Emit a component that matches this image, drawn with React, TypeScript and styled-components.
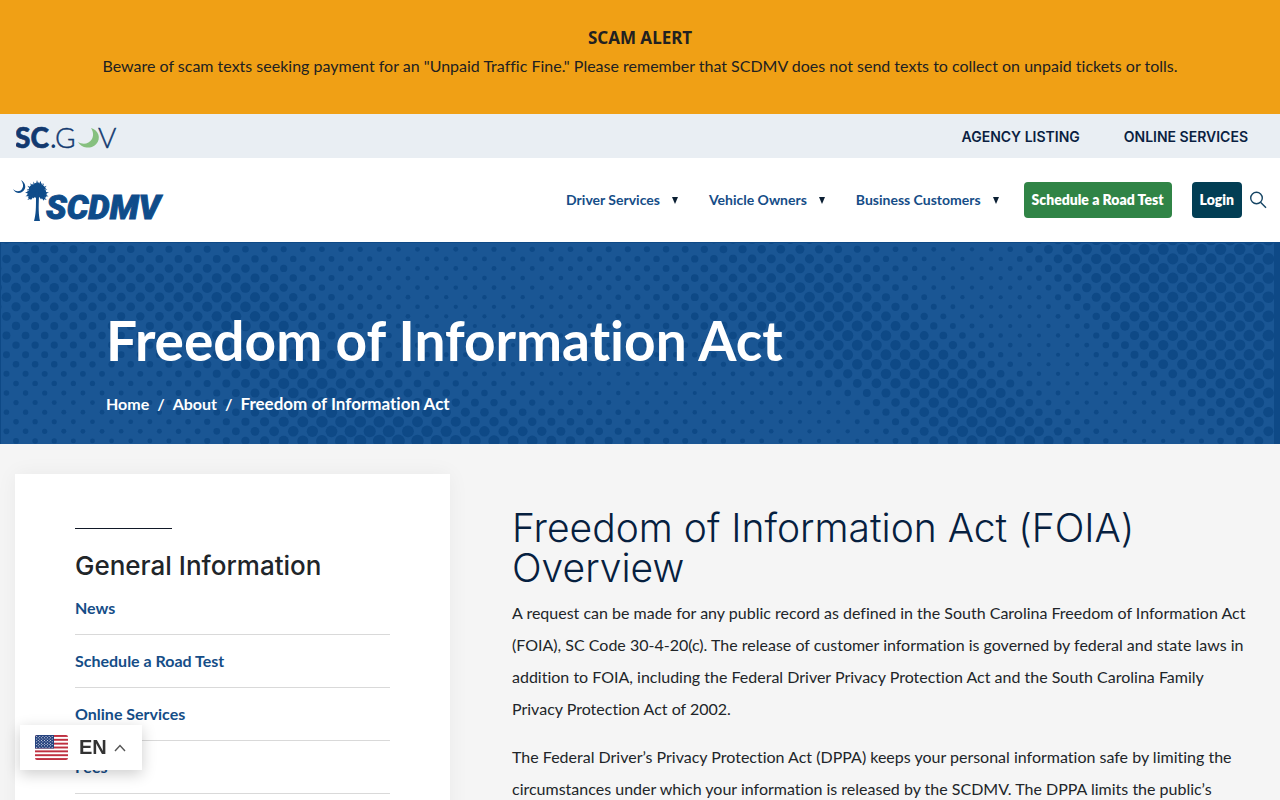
import React from "react";
import styled, { createGlobalStyle } from "styled-components";

const GlobalStyle = createGlobalStyle`
  *, *::before, *::after { box-sizing: border-box; }
  body {
    margin: 0;
    background: #f5f5f5;
    color: #212529;
    font-family: Lato, sans-serif;
    font-size: 16px;
    font-variant-ligatures: none;
  }
  a { color: inherit; text-decoration: none; }
  h1, h2, h3, p, ul, ol { margin: 0; padding: 0; }
  ul, ol { list-style: none; }
`;

const Alert = styled.section`
  background: #f0a015;
  color: #212121;
  min-height: 114px;
  padding: 24px 16px;
  text-align: center;
  line-height: 28px;
`;

const AlertTitle = styled.strong`
  display: block;
  font-family: "Noto Sans", sans-serif;
  font-size: 17px;
  font-weight: 700;
`;

const StateBar = styled.div`
  display: flex;
  align-items: center;
  justify-content: space-between;
  height: 44px;
  padding: 0 32px 0 16px;
  background: #e9eef3;
`;

const StateLinks = styled.nav`
  display: flex;
  gap: 44px;
  color: #0b1f42;
  font-family: Inter, sans-serif;
  font-size: 14px;
  font-weight: 600;
`;

const Header = styled.header`
  display: flex;
  align-items: center;
  justify-content: space-between;
  height: 84px;
  padding: 0 13px 0 12px;
  background: #fff;
`;

const LogoLink = styled.a`
  display: flex;
`;

const MainNav = styled.nav`
  display: flex;
  align-items: center;
`;

const Menus = styled.div`
  display: flex;
  gap: 31px;
  margin-right: 25px;
`;

const MenuButton = styled.button`
  display: flex;
  align-items: center;
  gap: 12px;
  padding: 0;
  border: 0;
  background: none;
  color: #154d87;
  font-family: inherit;
  font-size: 14px;
  font-weight: 700;
  line-height: 18px;
`;

const Caret = styled.span`
  width: 0;
  border: 3px solid transparent;
  border-top: 7px solid #0b1f33;
  border-bottom: 0;
`;

const ActionLink = styled.a<{ $tone: string; $gap: number }>`
  height: 36px;
  margin-right: ${(p) => p.$gap}px;
  padding: 0 8px;
  border-radius: 4px;
  background: ${(p) => p.$tone};
  color: #fff;
  font-size: 14px;
  font-weight: 800;
  line-height: 36px;
`;

const IconButton = styled.button`
  display: flex;
  padding: 0;
  border: 0;
  background: none;
  color: #154463;
`;

const Hero = styled.section`
  position: relative;
  min-height: 202px;
  padding: 63px 106px 0;
  overflow: hidden;
  background: #1a5694;
  color: #fff;
`;

const HeroPattern = styled.svg`
  position: absolute;
  inset: 0;
  width: 100%;
  height: 100%;
`;

const HeroBody = styled.div`
  position: relative;
`;

const HeroTitle = styled.h1`
  font-size: 55px;
  font-weight: 700;
  line-height: 70px;
`;

const Crumbs = styled.ol`
  display: flex;
  align-items: baseline;
  gap: 8px;
  margin-top: 17px;
  font-size: 16px;
  font-weight: 700;
  line-height: 24px;
`;

const CurrentCrumb = styled.li`
  font-size: 17px;
`;

const Columns = styled.main`
  display: grid;
  grid-template-columns: minmax(0, 435fr) minmax(0, 738fr);
  gap: 62px;
  padding: 30px 30px 0 15px;
`;

const SideCard = styled.aside`
  padding: 54px 60px 24px;
  background: #fff;
  box-shadow: 0 0 20px rgba(0, 0, 0, 0.05);
`;

const CardRule = styled.div`
  width: 97px;
  height: 1px;
  background: #111827;
`;

const CardTitle = styled.h3`
  margin-top: 21px;
  font-family: Inter, sans-serif;
  font-size: 26px;
  font-weight: 500;
  line-height: 32px;
`;

const SideItem = styled.li`
  height: 53px;
  padding-top: 14px;
  border-bottom: 1px solid #d9d9d9;
  color: #154d87;
  font-weight: 700;
  line-height: 24px;
`;

const Article = styled.article`
  padding-top: 34px;
`;

const ArticleTitle = styled.h2`
  margin-bottom: 9px;
  color: #06203f;
  font-family: Inter, sans-serif;
  font-size: 39px;
  font-weight: 300;
  line-height: 40px;
`;

const Paragraph = styled.p`
  margin-bottom: 16px;
  line-height: 32px;
`;

const LanguageButton = styled.button`
  position: fixed;
  bottom: 30px;
  left: 20px;
  display: flex;
  align-items: center;
  width: 122px;
  height: 45px;
  padding: 0 15px;
  border: 0;
  background: #fff;
  box-shadow: 0 4px 14px rgba(0, 0, 0, 0.2);
  color: #333;
  font-family: "Liberation Sans", sans-serif;
  font-size: 20px;
  font-weight: 700;
`;

const LanguageCode = styled.span`
  margin: 0 7px 0 11px;
`;

/* Halftone background: dot radii sampled every 40px across, one line per sampled height. */
const SAMPLE_STEP = 40;
const SAMPLE_ROWS: [number, number[]][] = [
  [7, [4, 4, 4, 3.8, 3.5, 3.5, 3.3, 3, 2.8, 2.6, 2.4, 2.4, 2.5, 2.6, 2.7, 3, 3, 3.3, 3.8, 4.2, 4.4, 3.8, 3, 2.5, 2.1, 2.2, 4.2, 5.2, 5.5, 5.5, 5.6, 5.7, 5.8]],
  [45, [5, 4.8, 4.6, 4.6, 5, 5.3, 5.3, 4.3, 3.2, 2.8, 2.4, 2.2, 2.3, 2.2, 2.2, 2.7, 3, 3.8, 4.2, 4.8, 5.3, 5.3, 3.8, 2.5, 2, 2.1, 2.4, 4.6, 5.4, 5.5, 5.6, 5.7, 5.8]],
  [80, [4.3, 4, 3.9, 3.9, 4.2, 4.8, 5.4, 5.2, 4, 3, 2.4, 2, 2, 2, 2.2, 2.5, 2.9, 3.5, 4.2, 4.8, 5.5, 5.8, 5.3, 4, 2.4, 2, 2, 2.5, 4.8, 5.4, 5.6, 5.7, 5.8]],
  [120, [3.3, 3.3, 3.2, 3.2, 3.4, 4, 4.8, 5.3, 4.8, 3.8, 3.2, 2.6, 2.3, 2.2, 2.2, 2.2, 2.3, 2.4, 2.6, 3, 3.7, 5.2, 5.4, 5.6, 5.2, 2.8, 2, 2, 3, 5, 5.5, 5.6, 5.7]],
  [140, [2.8, 2.7, 2.6, 2.6, 2.8, 3.4, 4.3, 5.5, 5.6, 4.8, 4, 3.2, 2.6, 2.3, 2.1, 2, 2, 2, 2, 2.2, 2.6, 4, 5, 5.4, 5.6, 4.5, 2.3, 2, 2, 3.2, 4.8, 5.5, 5.6]],
  [160, [2.6, 2.5, 2.3, 2.3, 2.6, 3, 3.8, 5, 5.6, 5.5, 4.8, 4.4, 3.8, 3.2, 2.8, 2.5, 2.2, 2, 2, 2, 2, 2.2, 3.8, 5, 5.5, 5.4, 3, 2.1, 2, 2.4, 4, 5.2, 5.4]],
  [200, [3, 2.7, 2.4, 2.3, 2.4, 2.8, 4, 5, 5.8, 6.2, 6.4, 6, 5.8, 5.5, 5, 4.3, 3.5, 3, 2.6, 2.4, 2.2, 2, 2.1, 4, 5.6, 5.8, 5.6, 3.6, 2.2, 2.1, 2.4, 4, 5]],
];

const sampleRow = (values: number[], x: number) => {
  const t = Math.min(Math.max(x / SAMPLE_STEP, 0), values.length - 1.001);
  const i = Math.floor(t);
  return values[i] + (values[i + 1] - values[i]) * (t - i);
};

const radiusAt = (x: number, y: number) => {
  let k = 0;
  while (k < SAMPLE_ROWS.length - 2 && y > SAMPLE_ROWS[k + 1][0]) k++;
  const [y0, upper] = SAMPLE_ROWS[k];
  const [y1, lower] = SAMPLE_ROWS[k + 1];
  const t = Math.min(Math.max((y - y0) / (y1 - y0), 0), 1);
  return sampleRow(upper, x) * (1 - t) + sampleRow(lower, x) * t;
};

const DOTS: { x: number; y: number; r: number }[] = [];
for (let row = -1; row < 21; row++) {
  const y = 7.3 + row * 9.58;
  for (let col = -1; col < 67; col++) {
    const x = 16 + col * 19.12 + (row % 2 ? 9.56 : 0);
    if (x < 1276) DOTS.push({ x, y, r: radiusAt(x, y) });
  }
}

const Halftone = () => (
  <HeroPattern viewBox="0 0 1280 202" preserveAspectRatio="xMidYMin slice" aria-hidden="true">
    <g fill="#0e4986">
      {DOTS.map((d, i) => (
        <circle key={i} cx={d.x} cy={d.y} r={d.r} />
      ))}
      <rect x="1274" width="6" height="202" />
      <rect width="1" height="202" />
      <rect width="1280" height="1" />
    </g>
  </HeroPattern>
);

const ScGovLogo = () => (
  <svg width="104" height="40" viewBox="0 0 104 40" role="img" aria-label="SC.GOV">
    <g fill="#12396f" fontFamily="Lato, sans-serif" fontSize="28">
      <text x="-1" y="32" fontWeight="900" stroke="#12396f" strokeWidth="0.6">SC</text>
      <text x="34" y="32">.</text>
      <text x="39" y="32" fontWeight="300" stroke="#12396f" strokeWidth="0.4">G</text>
      <text x="82" y="32" fontWeight="300" stroke="#12396f" strokeWidth="0.4">V</text>
    </g>
    <path d="M75 12A11 10 0 1 1 62 26C67 29 73 28 76 23C78 19 77 15 75 12Z" fill="#86c07f" />
  </svg>
);

/* Each palm frond: its direction in degrees and its length. */
const FRONDS: [number, number][] = [
  [-178, 12], [-160, 11], [-143, 12], [-125, 12], [-108, 12], [-90, 13], [-72, 13],
  [-54, 12], [-37, 12], [-20, 11], [-2, 12], [16, 12], [36, 12], [144, 12], [164, 12],
];

const DmvLogo = () => (
  <svg width="154" height="52" viewBox="0 0 154 52" role="img" aria-label="SCDMV">
    <g fill="#0f4c8a">
      <path d="M9 6C14 9 15 15 10 18C7 20 3 19 1 15C4 18 8 18 10 15C12 12 11 9 9 6Z" />
      <path d="M24 22L27 22C26.500 34 26.500 40 28 47L22 47C24 40 24 34 24 22Z" />
      <g transform="translate(25 19)">
        <circle r="5" />
        {FRONDS.map(([angle, length]) => (
          <path
            key={angle}
            transform={`rotate(${angle}) scale(${length / 12})`}
            d="M2 -1L6 -2.500L6 -1.300L9 -2L9 -0.800L12 0L9.500 0.800L10 2.200L7 1.400L7 2.800L4 1.600L2 1Z"
          />
        ))}
      </g>
      <text
        x="34"
        y="45"
        fontFamily="Roboto, sans-serif"
        fontSize="34"
        fontWeight="900"
        fontStyle="italic"
        stroke="#0f4c8a"
        strokeWidth="1"
      >
        SCDMV
      </text>
    </g>
  </svg>
);

const SearchIcon = () => (
  <svg width="18" height="18" viewBox="0 0 18 18" fill="none" stroke="currentColor" strokeWidth="1.4" aria-hidden="true">
    <circle cx="7.500" cy="7" r="5.800" />
    <path d="M11.500 11.200L17 16.800" />
  </svg>
);

const FlagIcon = () => (
  <svg width="33" height="25" viewBox="0 0 33 25" aria-hidden="true">
    <defs>
      <clipPath id="flag-edge"><rect width="33" height="25" rx="2" /></clipPath>
    </defs>
    <g clipPath="url(#flag-edge)">
      <rect width="33" height="25" fill="#fff" />
      {Array.from({ length: 7 }, (_, i) => (
        <rect key={i} y={(i * 50) / 13} width="33" height={25 / 13} fill="#bf3040" />
      ))}
      <rect width="19" height="13.5" fill="#26437f" />
      <g fill="#fff">
        {Array.from({ length: 9 }, (_, r) =>
          Array.from({ length: r % 2 ? 5 : 6 }, (_, c) => (
            <circle key={`${r}-${c}`} cx={1.7 + c * 3.1 + (r % 2 ? 1.55 : 0)} cy={1.4 + r * 1.35} r="0.5" />
          ))
        )}
      </g>
    </g>
  </svg>
);

const ChevronUp = () => (
  <svg width="12" height="8" viewBox="0 0 12 8" fill="none" stroke="#555" strokeWidth="1.4" aria-hidden="true">
    <path d="M1 7L6 1.5L11 7" />
  </svg>
);

const MENUS = ["Driver Services", "Vehicle Owners", "Business Customers"];
const SIDE_LINKS = ["News", "Schedule a Road Test", "Online Services", "Fees"];

export default function App() {
  return (
    <>
      <GlobalStyle />
      <Alert>
        <AlertTitle>SCAM ALERT</AlertTitle>
        <p>
          Beware of scam texts seeking payment for an "Unpaid Traffic Fine." Please remember that SCDMV does not send
          texts to collect on unpaid tickets or tolls.
        </p>
      </Alert>
      <StateBar>
        <LogoLink href="#"><ScGovLogo /></LogoLink>
        <StateLinks>
          <a href="#">AGENCY LISTING</a>
          <a href="#">ONLINE SERVICES</a>
        </StateLinks>
      </StateBar>
      <Header>
        <LogoLink href="#"><DmvLogo /></LogoLink>
        <MainNav>
          <Menus>
            {MENUS.map((label) => (
              <MenuButton key={label} type="button">
                {label}
                <Caret />
              </MenuButton>
            ))}
          </Menus>
          <ActionLink href="#" $tone="#308446" $gap={20}>Schedule a Road Test</ActionLink>
          <ActionLink href="#" $tone="#023e54" $gap={7}>Login</ActionLink>
          <IconButton type="button" aria-label="Search"><SearchIcon /></IconButton>
        </MainNav>
      </Header>
      <Hero>
        <Halftone />
        <HeroBody>
          <HeroTitle>Freedom of Information Act</HeroTitle>
          <Crumbs>
            <li><a href="#">Home</a></li>
            <li>/</li>
            <li><a href="#">About</a></li>
            <li>/</li>
            <CurrentCrumb>Freedom of Information Act</CurrentCrumb>
          </Crumbs>
        </HeroBody>
      </Hero>
      <Columns>
        <SideCard>
          <CardRule />
          <CardTitle>General Information</CardTitle>
          <ul>
            {SIDE_LINKS.map((label) => (
              <SideItem key={label}><a href="#">{label}</a></SideItem>
            ))}
          </ul>
        </SideCard>
        <Article>
          <ArticleTitle>Freedom of Information Act (FOIA) Overview</ArticleTitle>
          <Paragraph>
            A request can be made for any public record as defined in the South Carolina Freedom of Information Act
            (FOIA), SC Code 30-4-20(c). The release of customer information is governed by federal and state laws in
            addition to FOIA, including the Federal Driver Privacy Protection Act and the South Carolina Family Privacy
            Protection Act of 2002.
          </Paragraph>
          <Paragraph>
            The Federal Driver’s Privacy Protection Act (DPPA) keeps your personal information safe by limiting the
            circumstances under which your information is released by the SCDMV. The DPPA limits the public’s
          </Paragraph>
        </Article>
      </Columns>
      <LanguageButton type="button">
        <FlagIcon />
        <LanguageCode>EN</LanguageCode>
        <ChevronUp />
      </LanguageButton>
    </>
  );
}
